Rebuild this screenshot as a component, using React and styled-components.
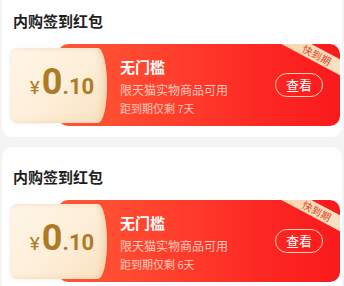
import styled, { createGlobalStyle } from "styled-components";

const GlobalStyle = createGlobalStyle`
  html, body {
    margin: 0;
    padding: 0;
    background: #f4f4f4;
    font-family: "Noto Sans CJK SC", "Noto Sans", sans-serif;
    overflow: hidden;
  }
`;

const Page = styled.div`
  display: flex;
  flex-direction: column;
  gap: 10px;
  padding: 0 2px;
  margin-top: -9px;
`;

const Card = styled.section`
  background: #fff;
  border-radius: 10px;
  padding: 19px 2px 11px 8px;
`;

const Title = styled.h2`
  margin: 0 0 13px 3px;
  font-size: 15px;
  line-height: 21px;
  font-weight: 600;
  color: #1f1f1f;
`;

const Coupon = styled.div`
  display: flex;
  align-items: center;
  height: 82px;
`;

const Stub = styled.div`
  position: relative;
  z-index: 1;
  flex: none;
  width: 97px;
  height: 75px;
  box-sizing: border-box;
  padding-left: 7px;
  display: flex;
  align-items: baseline;
  justify-content: center;
  padding-top: 16px;
  border-radius: 8px 9px 9px 8px / 8px 37px 37px 8px;
  background: linear-gradient(135deg, #fff6e8 0%, #fdeed8 55%, #f9e0bf 100%);
  box-shadow: inset -3px 0 5px rgba(226, 170, 110, 0.35),
    0 1px 4px rgba(0, 0, 0, 0.06);
  color: #ad7a25;
  font-family: Roboto, "Liberation Sans", sans-serif;
  font-weight: 700;
`;

const Yen = styled.span`
  font-size: 19px;
  font-weight: 400;
  margin-right: 2px;
`;

const Big = styled.span`
  font-size: 36px;
  line-height: 1;
`;

const Small = styled.span`
  font-size: 22px;
`;

const Body = styled.div`
  position: relative;
  flex: 1;
  height: 82px;
  margin-left: -49px;
  padding-left: 62px;
  padding-right: 17px;
  display: flex;
  align-items: center;
  border-radius: 10px;
  overflow: hidden;
  background: linear-gradient(90deg, #ff5a37 0%, #ff3f2d 40%, #fc2622 75%, #f91a1c 100%);
`;

const Info = styled.div`
  flex: 1;
  display: flex;
  flex-direction: column;
  color: #fff;
  padding-top: 2px;
`;

const Name = styled.div`
  font-size: 15px;
  line-height: 22px;
  font-weight: 700;
`;

const Note = styled.div`
  font-size: ${(p) => p.$size}px;
  line-height: 16px;
  margin-top: ${(p) => p.$gap}px;
  color: rgba(255, 232, 222, 0.82);
`;

const ViewButton = styled.button`
  flex: none;
  width: 48px;
  height: 24px;
  padding: 0;
  border: 1px solid rgba(255, 226, 196, 0.9);
  border-radius: 12px;
  background: transparent;
  color: #fff;
  font-family: inherit;
  font-size: 13px;
  line-height: 22px;
`;

const Ribbon = styled.div`
  position: absolute;
  top: 4px;
  right: -19px;
  width: 84px;
  height: 14px;
  transform: rotate(28deg);
  background: linear-gradient(90deg, #f8d6b0, #fbe4c6);
  color: #e0452e;
  font-size: 10px;
  line-height: 14px;
  text-align: center;
  letter-spacing: 0.5px;
`;

const coupons = [{ days: 7 }, { days: 6 }];

export default function App() {
  return (
    <>
      <GlobalStyle />
      <Page>
        {coupons.map((c, i) => (
          <Card key={i}>
            <Title>内购签到红包</Title>
            <Coupon>
              <Stub>
                <Yen>¥</Yen>
                <Big>0</Big>
                <Small>.10</Small>
              </Stub>
              <Body>
                <Ribbon>快到期</Ribbon>
                <Info>
                  <Name>无门槛</Name>
                  <Note $size={12} $gap={4}>
                    限天猫实物商品可用
                  </Note>
                  <Note $size={11} $gap={2}>
                    距到期仅剩 {c.days}天
                  </Note>
                </Info>
                <ViewButton>查看</ViewButton>
              </Body>
            </Coupon>
          </Card>
        ))}
      </Page>
    </>
  );
}
